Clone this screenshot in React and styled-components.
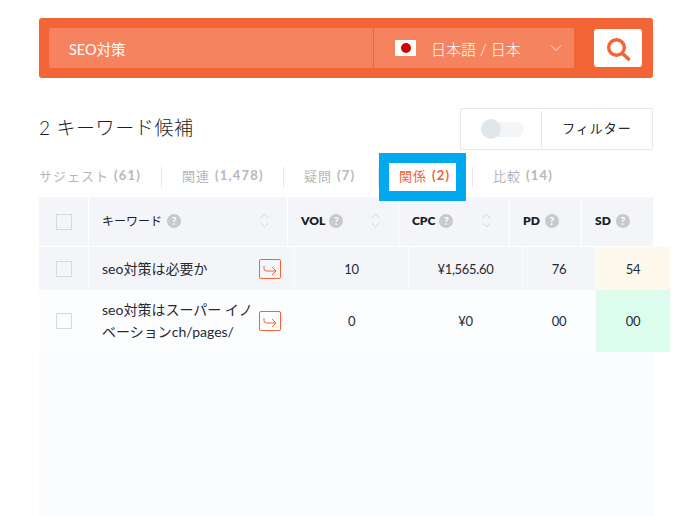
import React from "react";
import styled, { createGlobalStyle } from "styled-components";

const GlobalStyle = createGlobalStyle`
  html, body {
    margin: 0;
    height: 516px;
    overflow: hidden;
    background: #fff;
  }
  body {
    font-family: "Lato", "Noto Sans CJK JP", sans-serif;
    color: #252a33;
  }
`;

const Page = styled.div`
  width: 614px;
  padding: 18px 0 0 39px;
`;

const SearchBar = styled.div`
  display: flex;
  align-items: center;
  height: 60px;
  padding: 0 11px 0 10px;
  box-sizing: border-box;
  background: #f36436;
  border-radius: 3px;
`;

const KeywordInput = styled.input`
  width: 324px;
  height: 40px;
  box-sizing: border-box;
  padding: 0 20px;
  border: 0;
  border-radius: 2px 0 0 2px;
  outline: 0;
  background: #f5835f;
  color: #fff;
  font: 14.5px "Lato", "Noto Sans CJK JP", sans-serif;
`;

const LocaleSelect = styled.div`
  display: flex;
  align-items: center;
  width: 200px;
  height: 40px;
  box-sizing: border-box;
  margin-left: 1px;
  padding: 0 12px 0 21px;
  border-radius: 0 2px 2px 0;
  background: #f5835f;
  color: #fff;
  font-size: 15px;
  font-weight: 300;
`;

const Flag = styled.span`
  display: flex;
  align-items: center;
  justify-content: center;
  width: 21px;
  height: 16px;
  margin-right: 15px;
  background: #fff;
  &::after {
    content: "";
    width: 10px;
    height: 10px;
    border-radius: 50%;
    background: #cf0000;
  }
`;

const LocaleName = styled.span`
  flex: 1;
`;

const SearchButton = styled.button`
  display: flex;
  align-items: center;
  justify-content: center;
  width: 48px;
  height: 38px;
  margin-left: 20px;
  padding: 0;
  border: 0;
  border-radius: 3px;
  background: #fff;
`;

const ResultHead = styled.div`
  display: flex;
  align-items: center;
  justify-content: space-between;
  margin-top: 30px;
`;

const Heading = styled.h2`
  margin: 0;
  padding-bottom: 6px;
  color: #1a1d24;
  font-size: 19px;
  font-weight: 300;
  letter-spacing: 0.6px;
`;

const FilterBox = styled.div`
  display: flex;
  align-items: center;
  width: 193px;
  height: 42px;
  box-sizing: border-box;
  border: 1px solid #e4e7ee;
  border-radius: 2px;
`;

const ToggleCell = styled.div`
  display: flex;
  align-items: center;
  width: 81px;
  height: 37px;
  box-sizing: border-box;
  padding-left: 20px;
  border-right: 1px solid #e4e7ee;
`;

const Toggle = styled.span`
  display: block;
  position: relative;
  width: 43px;
  height: 15px;
  border-radius: 8px;
  background: #f3f5f7;
  &::before {
    content: "";
    position: absolute;
    left: 0;
    top: -3px;
    width: 20px;
    height: 20px;
    border-radius: 50%;
    background: #e1e6eb;
  }
`;

const FilterLabel = styled.span`
  flex: 1;
  padding-bottom: 3px;
  text-align: center;
  font-size: 13px;
  letter-spacing: 1px;
`;

const Tabs = styled.ul`
  display: flex;
  align-items: center;
  height: 20px;
  margin: 17px 0 0;
  padding: 0;
  list-style: none;
`;

const Tab = styled.li`
  position: relative;
  display: flex;
  align-items: center;
  width: ${(p) => p.$w}px;
  height: 20px;
  box-sizing: border-box;
  padding: ${(p) => (p.$first ? "0 0 4px 0" : "0 0 4px 20px")};
  border-right: ${(p) => (p.$last ? "0" : "1px solid #e5e7ea")};
  color: ${(p) => (p.$active ? "#f2603a" : "#b5b7bb")};
  font-size: 13px;
  letter-spacing: 1px;
  white-space: nowrap;
  ${(p) =>
    p.$active &&
    `&::before {
      content: "";
      position: absolute;
      left: 0;
      top: -14px;
      width: 87px;
      height: 48px;
      box-sizing: border-box;
      border: 10px solid #00a8f0;
    }`}
`;

const TabCount = styled.b`
  margin-left: 5px;
  font-weight: 700;
  letter-spacing: 1.2px;
`;

const Table = styled.div`
  margin-top: 10px;
`;

const HeadRow = styled.div`
  display: grid;
  grid-template-columns: 49px 198px 110px 110px 71px 71px;
  column-gap: 1px;
  height: 49px;
  margin-bottom: 1px;
`;

const HeadCell = styled.div`
  display: flex;
  align-items: center;
  gap: 5px;
  padding: ${(p) => (p.$narrow ? "0 0 2px 13px" : "0 18px 2px 13px")};
  background: #f3f5f8;
  color: #1a1d24;
  font-size: 12px;
  font-weight: ${(p) => (p.$bold ? 800 : 400)};
`;

const BoxCell = styled(HeadCell)`
  justify-content: center;
  padding: 0;
`;

const Help = styled.span`
  display: flex;
  align-items: center;
  justify-content: center;
  width: 14px;
  height: 14px;
  margin-left: ${(p) => (p.$tight ? "-1px" : "0")};
  border-radius: 50%;
  background: #c8c9cb;
  color: #fff;
  font-size: 11px;
  font-weight: 700;
`;

const SortIcon = styled.svg`
  margin-left: auto;
  display: block;
`;

const Checkbox = styled.span`
  display: block;
  width: 14px;
  height: 14px;
  border: 1px solid #d8d9db;
`;

const Body = styled.div`
  width: 614px;
  height: 269px;
  background: #fbfcfe;
`;

const Row = styled.div`
  display: grid;
  grid-template-columns: 49px 205px 113px 113px 72px 74px;
  column-gap: 1px;
  width: 631px;
  height: ${(p) => p.$h}px;
`;

const Cell = styled.div`
  display: flex;
  align-items: center;
  justify-content: center;
  background: ${(p) => p.$bg};
  font-size: 13px;
  letter-spacing: -0.3px;
`;

const KeywordCell = styled(Cell)`
  justify-content: space-between;
  padding: 0 13px;
  font-size: 14px;
  letter-spacing: 0;
  line-height: 22px;
`;

const KeywordText = styled.span`
  width: 156px;
`;

const GoButton = styled.span`
  display: flex;
  align-items: center;
  justify-content: center;
  flex: none;
  width: 20px;
  height: 18px;
  border: 1px solid #f46437;
  border-radius: 2px;
`;

const rows = [
  { h: 43, bg: "#f4f5f8", sd: "#fff8ec", kw: "seo対策は必要か", vol: "10", cpc: "¥1,565.60", pd: "76", score: "54" },
  { h: 62, bg: "#fcfdff", sd: "#dcfdee", kw: "seo対策はスーパー イノベーションch/pages/", vol: "0", cpc: "¥0", pd: "00", score: "00" },
];

const tabs = [
  { label: "サジェスト", count: "(61)", w: 123 },
  { label: "関連", count: "(1,478)", w: 122 },
  { label: "疑問", count: "(7)", w: 95 },
  { label: "関係", count: "(2)", w: 94, active: true },
  { label: "比較", count: "(14)", w: 100 },
];

function Sort() {
  return (
    <SortIcon width="9" height="15" viewBox="0 0 9 15" fill="none" stroke="#d3d5d8" strokeWidth="1">
      <path d="M.7 5 4.500 1.200 8.300 5M.7 10l3.800 3.800L8.300 10" />
    </SortIcon>
  );
}

export default function App() {
  return (
    <Page>
      <GlobalStyle />
      <SearchBar>
        <KeywordInput defaultValue="SEO対策" />
        <LocaleSelect>
          <Flag />
          <LocaleName>日本語 / 日本</LocaleName>
          <svg width="12" height="8" viewBox="0 0 12 8" fill="none" stroke="#ffe6dc" strokeWidth="1">
            <path d="M1 1.500 6 6.500l5-5" />
          </svg>
        </LocaleSelect>
        <SearchButton>
          <svg width="26" height="26" viewBox="0 0 26 26" fill="none" stroke="#f36436">
            <circle cx="11.500" cy="12.500" r="7.800" strokeWidth="3.400" />
            <path d="M18 19l5.500 5" strokeWidth="3.600" strokeLinecap="round" />
          </svg>
        </SearchButton>
      </SearchBar>

      <ResultHead>
        <Heading>2 キーワード候補</Heading>
        <FilterBox>
          <ToggleCell>
            <Toggle />
          </ToggleCell>
          <FilterLabel>フィルター</FilterLabel>
        </FilterBox>
      </ResultHead>

      <Tabs>
        {tabs.map((t, i) => (
          <Tab key={t.label} $w={t.w} $first={i === 0} $last={i === tabs.length - 1} $active={t.active}>
            {t.label}
            <TabCount>{t.count}</TabCount>
          </Tab>
        ))}
      </Tabs>

      <Table>
        <HeadRow>
          <BoxCell>
            <Checkbox />
          </BoxCell>
          <HeadCell>
            キーワード <Help>?</Help>
            <Sort />
          </HeadCell>
          <HeadCell $bold>
            VOL <Help $tight>?</Help>
            <Sort />
          </HeadCell>
          <HeadCell $bold>
            CPC <Help $tight>?</Help>
            <Sort />
          </HeadCell>
          <HeadCell $bold $narrow>
            PD <Help>?</Help>
          </HeadCell>
          <HeadCell $bold $narrow>
            SD <Help>?</Help>
          </HeadCell>
        </HeadRow>
        <Body>
          {rows.map((r) => (
            <Row key={r.kw} $h={r.h}>
              <Cell $bg={r.bg}>
                <Checkbox />
              </Cell>
              <KeywordCell $bg={r.bg}>
                <KeywordText>{r.kw}</KeywordText>
                <GoButton>
                  <svg width="16" height="12" viewBox="0 0 16 12" fill="none" stroke="#f46437" strokeWidth="1">
                    <path d="M2 3v2.500Q2 8 4.500 8H14M10 4l4 4-4 4" />
                  </svg>
                </GoButton>
              </KeywordCell>
              <Cell $bg={r.bg}>{r.vol}</Cell>
              <Cell $bg={r.bg}>{r.cpc}</Cell>
              <Cell $bg={r.bg}>{r.pd}</Cell>
              <Cell $bg={r.sd}>{r.score}</Cell>
            </Row>
          ))}
        </Body>
      </Table>
    </Page>
  );
}
